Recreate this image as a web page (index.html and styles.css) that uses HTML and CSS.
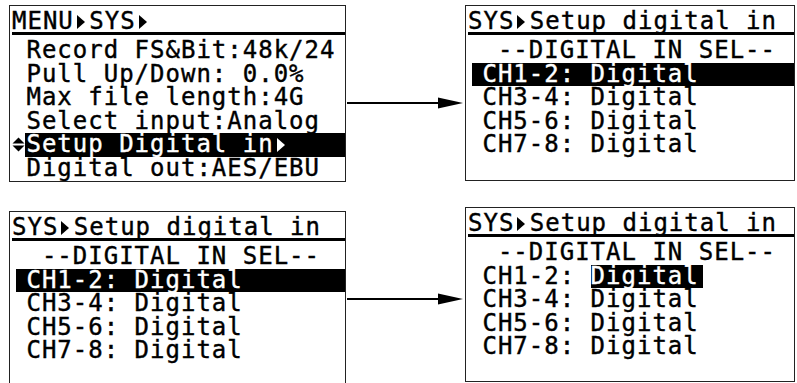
FILE: index.html
```html
<!DOCTYPE html>
<html lang="en">
<head>
    <meta charset="UTF-8">
    <title>SYS menu - Setup digital in</title>
    <link rel="stylesheet" href="styles.css">
</head>
<body>

    <div class="figure">

        <!-- Step 1: SYS menu -->
        <div class="lcd lcd-menu">
            <div class="lcd-head">MENU<span class="tri"></span>SYS<span class="tri"></span></div>
            <div class="lcd-row"> Record FS&amp;Bit:48k/24</div>
            <div class="lcd-row"> Pull Up/Down: 0.0%</div>
            <div class="lcd-row"> Max file length:4G</div>
            <div class="lcd-row"> Select input:Analog</div>
            <div class="lcd-row row-cursor"><span class="updown"><svg width="13" height="15" viewBox="0 0 13 15"><polygon points="0.5,6.5 6.5,0.5 12.5,6.5" fill="#000"/><polygon points="0.5,8.5 6.5,14.5 12.5,8.5" fill="#000"/></svg></span><span class="bar">Setup Digital in<span class="tri"></span></span></div>
            <div class="lcd-row"> Digital out:AES/EBU</div>
        </div>

        <div class="arrow arrow-top">
            <svg width="116" height="12" viewBox="0 0 116 12"><line x1="0" y1="6" x2="94" y2="6" stroke="#000" stroke-width="2"/><polygon points="91,0.5 116,6 91,11.5" fill="#000"/></svg>
        </div>

        <!-- Step 2: digital in list -->
        <div class="lcd lcd-small">
            <div class="lcd-head">SYS<span class="tri"></span>Setup digital in</div>
            <div class="lcd-row">  --DIGITAL IN SEL--</div>
            <div class="lcd-row sel"> CH1-2: Digital</div>
            <div class="lcd-row"> CH3-4: Digital</div>
            <div class="lcd-row"> CH5-6: Digital</div>
            <div class="lcd-row"> CH7-8: Digital</div>
        </div>

        <!-- Step 3: channel pair selected -->
        <div class="lcd lcd-cut">
            <div class="lcd-head">SYS<span class="tri"></span>Setup digital in</div>
            <div class="lcd-row">  --DIGITAL IN SEL--</div>
            <div class="lcd-row sel"> CH1-2: Digital</div>
            <div class="lcd-row"> CH3-4: Digital</div>
            <div class="lcd-row"> CH5-6: Digital</div>
            <div class="lcd-row"> CH7-8: Digital</div>
        </div>

        <div class="arrow arrow-bottom">
            <svg width="116" height="12" viewBox="0 0 116 12"><line x1="0" y1="6" x2="94" y2="6" stroke="#000" stroke-width="2"/><polygon points="91,0.5 116,6 91,11.5" fill="#000"/></svg>
        </div>

        <!-- Step 4: value selected -->
        <div class="lcd lcd-small lcd-last">
            <div class="lcd-head">SYS<span class="tri"></span>Setup digital in</div>
            <div class="lcd-row">  --DIGITAL IN SEL--</div>
            <div class="lcd-row"> CH1-2: <span class="val">Digital</span></div>
            <div class="lcd-row"> CH3-4: Digital</div>
            <div class="lcd-row"> CH5-6: Digital</div>
            <div class="lcd-row"> CH7-8: Digital</div>
        </div>

    </div>

</body>
</html>
```

FILE: styles.css
```css
/* ===== General ===== */
body {
    margin: 0;
    background: #fff;
    overflow: hidden;
    font-family: "DejaVu Sans Mono", "Liberation Mono", monospace;
    color: #000;
}

/* ===== Figure grid: screen / arrow / screen ===== */
.figure {
    display: grid;
    grid-template-columns: 337px 119px 330px;
    row-gap: 25px;
    align-items: start;
    padding: 5px 0 0 9px;
}

/* ===== LCD screen ===== */
.lcd {
    box-sizing: border-box;
    height: 176px;
    border: 1px solid #222;
    padding: 4px 0 0 1px;
    font-size: 24px;
    letter-spacing: 1px;
    -webkit-text-stroke: 0.4px currentColor;
    overflow: hidden;
}

.lcd-menu {
    height: 177px;
}

.lcd-cut {
    height: 190px;
    margin-top: 4px;
}

.lcd-last {
    height: 175px;
}

.lcd-head {
    line-height: 22px;
    white-space: pre;
    border-bottom: 3px solid #000;
    margin: 0 0 4px 1px;
}

.lcd-row {
    line-height: 23.5px;
    height: 23.5px;
    white-space: pre;
}

/* right-pointing marker used in the menu path */
.tri {
    display: inline-block;
    width: calc(1ch + 1px);
    height: 14px;
    position: relative;
}

.tri::before {
    content: "";
    position: absolute;
    left: 3px;
    top: 0;
    border-left: 8px solid currentColor;
    border-top: 7px solid transparent;
    border-bottom: 7px solid transparent;
}

/* ===== Selected lines ===== */
.sel {
    background: #000;
    color: #fff;
    margin-left: 5px;
    text-indent: -5px;
}

.row-cursor {
    display: flex;
}

.updown {
    width: calc(1ch - 1px);
    display: flex;
    align-items: center;
    padding-left: 1px;
}

.bar {
    flex: 1;
    background: #000;
    color: #fff;
    padding-left: 1px;
}

.val {
    display: inline-block;
    line-height: 23.5px;
    background: #000;
    color: #fff;
    padding-right: 4px;
}

/* ===== Arrows ===== */
.arrow {
    padding-left: 1px;
    line-height: 0;
}

.arrow-top {
    margin-top: 92px;
}

.arrow-bottom {
    margin-top: 86px;
}
```
